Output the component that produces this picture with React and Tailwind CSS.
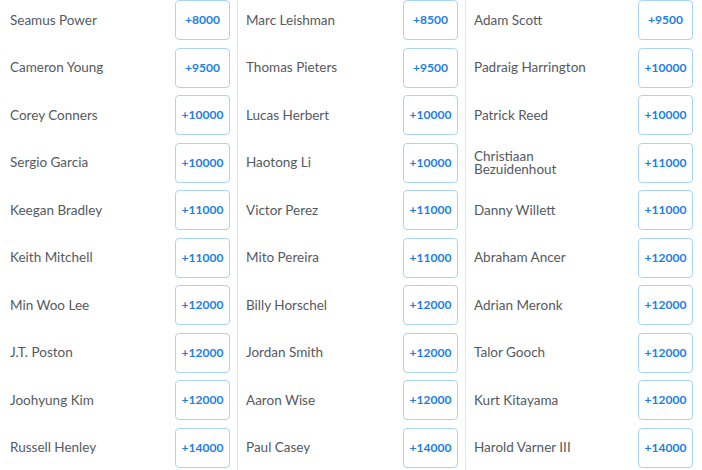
const columns = [
  [
    ['Seamus Power', '+8000'],
    ['Cameron Young', '+9500'],
    ['Corey Conners', '+10000'],
    ['Sergio Garcia', '+10000'],
    ['Keegan Bradley', '+11000'],
    ['Keith Mitchell', '+11000'],
    ['Min Woo Lee', '+12000'],
    ['J.T. Poston', '+12000'],
    ['Joohyung Kim', '+12000'],
    ['Russell Henley', '+14000'],
  ],
  [
    ['Marc Leishman', '+8500'],
    ['Thomas Pieters', '+9500'],
    ['Lucas Herbert', '+10000'],
    ['Haotong Li', '+10000'],
    ['Victor Perez', '+11000'],
    ['Mito Pereira', '+11000'],
    ['Billy Horschel', '+12000'],
    ['Jordan Smith', '+12000'],
    ['Aaron Wise', '+12000'],
    ['Paul Casey', '+14000'],
  ],
  [
    ['Adam Scott', '+9500'],
    ['Padraig Harrington', '+10000'],
    ['Patrick Reed', '+10000'],
    ['Christiaan Bezuidenhout', '+11000'],
    ['Danny Willett', '+11000'],
    ['Abraham Ancer', '+12000'],
    ['Adrian Meronk', '+12000'],
    ['Talor Gooch', '+12000'],
    ['Kurt Kitayama', '+12000'],
    ['Harold Varner III', '+14000'],
  ],
];

const colClasses = [
  'w-[238px] pl-[10px] pr-[7px] border-r border-[#e3e6ea]',
  'w-[228px] pl-2 pr-[7px] border-r border-[#e3e6ea]',
  'flex-1 pl-2 pr-[9px]',
];

const OddsRow = ({ name, odds }) => (
  <div className="flex items-center justify-between h-[40px]">
    <span className="text-[13.5px] leading-[13px] text-[#555a60] max-w-[125px]">{name}</span>
    <button className="w-[55px] h-[40px] rounded-[4px] border border-[#a9d3f7] bg-white text-[12px] font-bold text-[#1c7fe0]">
      {odds}
    </button>
  </div>
);

export default function App() {
  return (
    <div className="w-[702px] h-[470px] bg-white flex overflow-hidden" style={{ fontFamily: 'Lato, "Liberation Sans", sans-serif' }}>
      {columns.map((col, i) => (
        <div key={i} className={`flex flex-col gap-[7.5px] ${colClasses[i]}`}>
          {col.map(([name, odds]) => (
            <OddsRow key={name} name={name} odds={odds} />
          ))}
        </div>
      ))}
    </div>
  );
}
